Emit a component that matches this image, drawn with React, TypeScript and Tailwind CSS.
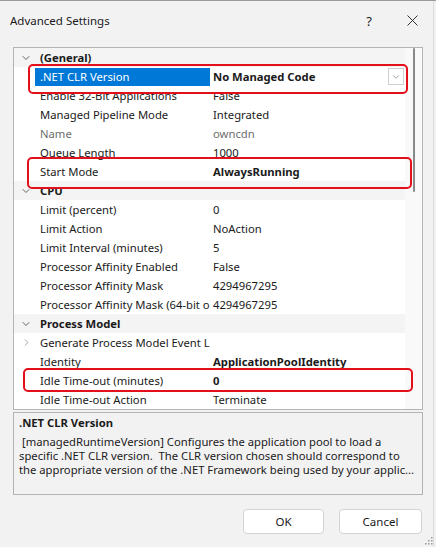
import { ChevronDown, ChevronRight } from "lucide-react";

type Row =
  | { kind: "cat"; label: string }
  | {
      kind: "prop";
      label: string;
      value: string;
      bold?: boolean;
      dim?: boolean;
      selected?: boolean;
      expand?: boolean;
      dropdown?: boolean;
    };

const rows: Row[] = [
  { kind: "cat", label: "(General)" },
  { kind: "prop", label: ".NET CLR Version", value: "No Managed Code", bold: true, selected: true, dropdown: true },
  { kind: "prop", label: "Enable 32-Bit Applications", value: "False" },
  { kind: "prop", label: "Managed Pipeline Mode", value: "Integrated" },
  { kind: "prop", label: "Name", value: "owncdn", dim: true },
  { kind: "prop", label: "Queue Length", value: "1000" },
  { kind: "prop", label: "Start Mode", value: "AlwaysRunning", bold: true },
  { kind: "cat", label: "CPU" },
  { kind: "prop", label: "Limit (percent)", value: "0" },
  { kind: "prop", label: "Limit Action", value: "NoAction" },
  { kind: "prop", label: "Limit Interval (minutes)", value: "5" },
  { kind: "prop", label: "Processor Affinity Enabled", value: "False" },
  { kind: "prop", label: "Processor Affinity Mask", value: "4294967295" },
  { kind: "prop", label: "Processor Affinity Mask (64-bit option)", value: "4294967295" },
  { kind: "cat", label: "Process Model" },
  { kind: "prop", label: "Generate Process Model Event Log Entry", value: "", expand: true },
  { kind: "prop", label: "Identity", value: "ApplicationPoolIdentity", bold: true },
  { kind: "prop", label: "Idle Time-out (minutes)", value: "0", bold: true },
  { kind: "prop", label: "Idle Time-out Action", value: "Terminate" },
];

function GridRow({ row }: { row: Row }) {
  if (row.kind === "cat") {
    return (
      <div className="flex h-[19px] items-center bg-[#f4f4f4] leading-[19px]">
        <div className="flex w-[21px] justify-center pl-[2px]">
          <ChevronDown size={12} strokeWidth={1.6} className="text-[#404040]" />
        </div>
        <span className="pl-[5px] font-bold text-[#1a1a1a]">{row.label}</span>
      </div>
    );
  }
  return (
    <div className="flex h-[19px] items-center bg-white leading-[18px]">
      <div className="flex w-[21px] justify-center pl-[3px]">
        {row.expand && <ChevronRight size={11} strokeWidth={1.4} className="text-[#7a7a7a]" />}
      </div>
      <div
        className={`h-[18px] w-[175px] overflow-hidden whitespace-nowrap pl-[5px] ${
          row.selected ? "bg-[#0078d7] text-white" : row.dim ? "text-[#6e6e6e]" : "text-[#1a1a1a]"
        }`}
      >
        {row.label}
      </div>
      <div className="w-px" />
      <div
        className={`flex h-[18px] flex-1 items-center overflow-hidden whitespace-nowrap pl-[2px] ${
          row.bold ? "font-bold" : ""
        } ${row.dim ? "text-[#6e6e6e]" : "text-[#1a1a1a]"}`}
      >
        {row.value}
        {row.dropdown && (
          <div className="ml-auto mr-px flex h-[17px] w-[16px] items-center justify-center border border-[#cfcfcf] bg-white">
            <ChevronDown size={10} strokeWidth={1.3} className="text-[#555]" />
          </div>
        )}
      </div>
    </div>
  );
}

export default function App() {
  return (
    <div className="relative h-[547px] w-[436px] overflow-hidden border-t border-[#9a9a9a] bg-[#f3f2f3] font-['Noto_Sans','Open_Sans',sans-serif] text-[11.25px] leading-[14px] text-[#1a1a1a]">
      <div className="absolute right-[2px] top-0 h-full w-px bg-[#dcdcdc]" />

      {/* title bar */}
      <div className="flex h-[39px] items-center pl-[10px] pr-[14px]">
        <span className="text-[11.5px]">Advanced Settings</span>
        <span className="ml-auto mr-[35px] text-[13px]">?</span>
        <svg width="11" height="11" viewBox="0 0 11 11" className="mr-[4px]">
          <path d="M0.5 0.5L10.5 10.5M10.5 0.5L0.5 10.5" stroke="#333" strokeWidth="1" />
        </svg>
      </div>

      {/* property grid */}
      <div className="mx-[13px] mt-[7px] flex h-[363px] border border-[#b4b4b4] bg-white">
        <div className="flex-1 overflow-hidden">
          {rows.map((r, i) => (
            <GridRow key={i} row={r} />
          ))}
        </div>
        <div className="relative w-[17px] bg-[#f9f9f9]">
          <div className="absolute left-[8px] top-0 h-[144px] w-[2px] rounded-full bg-[#8a8a8a]" />
        </div>
      </div>

      {/* description */}
      <div className="mx-[13px] mt-[2px] h-[83px] border border-[#b4b4b4] pl-[5px] pt-[3px]">
        <div className="font-bold">.NET CLR Version</div>
        <div className="mt-[5px] whitespace-pre">
          <div> [managedRuntimeVersion] Configures the application pool to load a</div>
          <div>specific .NET CLR version.  The CLR version chosen should correspond to</div>
          <div>the appropriate version of the .NET Framework being used by your applic...</div>
        </div>
      </div>

      {/* buttons */}
      <div className="mt-[14px] flex justify-end gap-[15px] pr-[14px]">
        <button className="h-[25px] w-[81px] rounded-[4px] border border-[#d3d3d3] bg-white text-[11.5px]">OK</button>
        <button className="h-[25px] w-[83px] rounded-[4px] border border-[#d3d3d3] bg-white text-[11.5px]">Cancel</button>
      </div>

      {/* resize grip */}
      <svg width="9" height="9" viewBox="0 0 9 9" className="absolute bottom-[2px] right-[3px]">
        <rect x="7" y="1" width="1.5" height="1.5" fill="#9a9a9a" />
        <rect x="4" y="4" width="1.5" height="1.5" fill="#9a9a9a" />
        <rect x="7" y="4" width="1.5" height="1.5" fill="#9a9a9a" />
        <rect x="1" y="7" width="1.5" height="1.5" fill="#9a9a9a" />
        <rect x="4" y="7" width="1.5" height="1.5" fill="#9a9a9a" />
        <rect x="7" y="7" width="1.5" height="1.5" fill="#9a9a9a" />
      </svg>

      {/* red annotations */}
      <div className="pointer-events-none absolute left-[28px] top-[63px] h-[30px] w-[380px] rounded-[5px] border-2 border-[#e3101b]" />
      <div className="pointer-events-none absolute left-[27px] top-[156px] h-[32px] w-[385px] rounded-[5px] border-2 border-[#e3101b]" />
      <div className="pointer-events-none absolute left-[23px] top-[367px] h-[24px] w-[390px] rounded-[5px] border-2 border-[#e3101b]" />
    </div>
  );
}
